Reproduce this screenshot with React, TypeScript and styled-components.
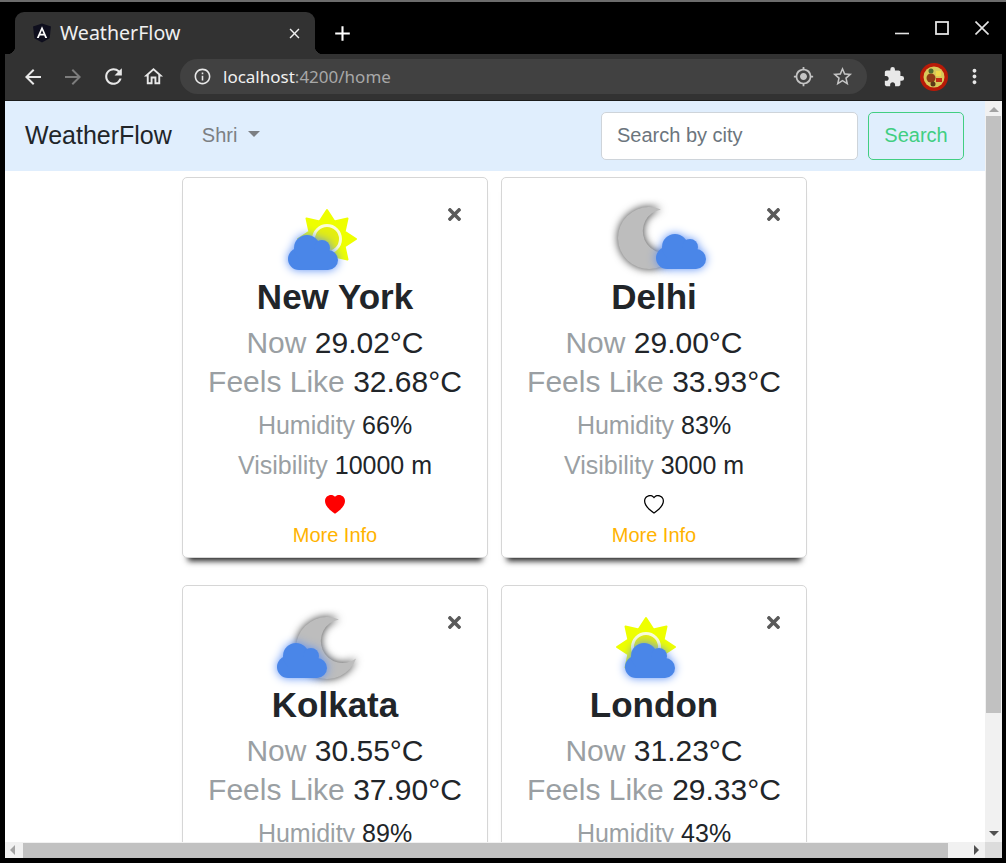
import React from "react";
import styled, { createGlobalStyle } from "styled-components";
import { BsHeart, BsHeartFill } from "react-icons/bs";
import { FaTimes } from "react-icons/fa";
import {
  MdAdd,
  MdArrowBack,
  MdArrowForward,
  MdClose,
  MdExtension,
  MdGpsFixed,
  MdInfoOutline,
  MdMoreVert,
  MdOutlineHome,
  MdRefresh,
  MdStarBorder,
} from "react-icons/md";

const Sans = `"Liberation Sans", Arial, sans-serif`;
const ChromeFont = `"Noto Sans", "Open Sans", sans-serif`;

type Kind = "sunLeft" | "moonLeft" | "moonRight" | "sunCenter";

interface City {
  name: string;
  now: string;
  feels: string;
  humidity: string;
  visibility: string;
  kind: Kind;
  liked: boolean;
}

const cities: City[] = [
  { name: "New York", now: "29.02°C", feels: "32.68°C", humidity: "66%", visibility: "10000 m", kind: "sunLeft", liked: true },
  { name: "Delhi", now: "29.00°C", feels: "33.93°C", humidity: "83%", visibility: "3000 m", kind: "moonLeft", liked: false },
  { name: "Kolkata", now: "30.55°C", feels: "37.90°C", humidity: "89%", visibility: "6000 m", kind: "moonRight", liked: false },
  { name: "London", now: "31.23°C", feels: "29.33°C", humidity: "43%", visibility: "10000 m", kind: "sunCenter", liked: false },
];

const starPoints = Array.from({ length: 16 }, (_, i) => {
  const r = i % 2 === 0 ? 29 : 19;
  const a = (i * Math.PI) / 8 - Math.PI / 2;
  return `${(r * Math.cos(a)).toFixed(1)},${(r * Math.sin(a)).toFixed(1)}`;
}).join(" ");

const Sun = ({ x, y }: { x: number; y: number }) => (
  <g transform={`translate(${x} ${y})`}>
    <polygon points={starPoints} fill="#eeff00" stroke="#eeff00" strokeWidth="2" strokeLinejoin="round" />
    <circle r="13.5" fill="#e4ee10" stroke="#fbfdd8" strokeWidth="3" />
  </g>
);

const Moon = ({ x, y }: { x: number; y: number }) => (
  <MoonShape
    transform={`translate(${x} ${y})`}
    d="M11.9 -28.6A31 31 0 1 0 29.1 10.6A22 22 0 1 1 11.9 -28.6Z"
  />
);

const Cloud = ({ x, y }: { x: number; y: number }) => (
  <CloudShape transform={`translate(${x} ${y})`}>
    <circle cx="11" cy="24" r="11" />
    <circle cx="19" cy="13" r="13" />
    <circle cx="34" cy="13" r="8" />
    <circle cx="40" cy="25" r="10" />
    <rect x="11" y="14" width="29" height="21" />
  </CloudShape>
);

const WeatherIcon = ({ kind }: { kind: Kind }) => (
  <IconSvg viewBox="0 0 120 76">
    {kind === "sunLeft" && (
      <>
        <Sun x={52} y={37} />
        <Cloud x={13} y={33} />
      </>
    )}
    {kind === "moonLeft" && (
      <>
        <Moon x={55} y={36} />
        <Cloud x={62} y={32} />
      </>
    )}
    {kind === "moonRight" && (
      <>
        <Moon x={52} y={38} />
        <Cloud x={2} y={33} />
      </>
    )}
    {kind === "sunCenter" && (
      <>
        <Sun x={52} y={37} />
        <Cloud x={31} y={33} />
      </>
    )}
  </IconSvg>
);

const AngularLogo = () => (
  <svg width="20" height="20" viewBox="0 0 20 20">
    <path d="M10 0.5L1 3.6l1.4 11.6L10 19.5l7.6-4.3L19 3.6z" fill="#0f0f1e" />
    <path d="M10 3.2L4.8 15h2l1-2.6h4.4l1 2.6h2zM8.5 10.8L10 7.2l1.5 3.6z" fill="#fff" />
  </svg>
);

const Avatar = () => (
  <svg width="28" height="28" viewBox="0 0 28 28">
    <circle cx="14" cy="14" r="14" fill="#b81a08" />
    <circle cx="14" cy="14" r="10.5" fill="#d8c85a" />
    <circle cx="11" cy="15" r="4.5" fill="#8e3b16" />
    <rect x="16" y="8" width="5" height="5" fill="#efd94a" />
    <rect x="16" y="15" width="6" height="4" fill="#c22a14" />
    <circle cx="11" cy="8" r="2.5" fill="#4e6a30" />
    <circle cx="13" cy="21" r="2.5" fill="#5b3a18" />
  </svg>
);

const App: React.FC = () => (
  <Frame>
    <GlobalStyle />
    <TabStrip>
      <Tab>
        <AngularLogo />
        <TabTitle>WeatherFlow</TabTitle>
        <MdClose size={17} />
      </Tab>
      <NewTab>
        <MdAdd size={25} />
      </NewTab>
      <WindowControls>
        <svg width="14" height="14" viewBox="0 0 14 14">
          <path d="M0 12.5h14" stroke="#e4e4e4" strokeWidth="1.6" />
        </svg>
        <svg width="14" height="14" viewBox="0 0 14 14">
          <rect x="1" y="1" width="12" height="12" fill="none" stroke="#e4e4e4" strokeWidth="1.8" />
        </svg>
        <svg width="14" height="14" viewBox="0 0 14 14">
          <path d="M0.5 0.5l13 13M13.5 0.5l-13 13" stroke="#e4e4e4" strokeWidth="1.6" />
        </svg>
      </WindowControls>
    </TabStrip>

    <Toolbar>
      <NavIcons>
        <NavSlot>
          <MdArrowBack size={24} color="#e8e8e8" />
        </NavSlot>
        <NavSlot>
          <MdArrowForward size={24} color="#7d7d7d" />
        </NavSlot>
        <NavSlot>
          <MdRefresh size={25} color="#e8e8e8" />
        </NavSlot>
        <NavSlot>
          <MdOutlineHome size={23} color="#e8e8e8" />
        </NavSlot>
      </NavIcons>
      <Omnibox>
        <MdInfoOutline size={19} color="#e8e8e8" />
        <Url>
          localhost<UrlDim>:4200/home</UrlDim>
        </Url>
        <MdGpsFixed size={21} color="#c4c4c4" />
        <MdStarBorder size={23} color="#c4c4c4" />
      </Omnibox>
      <ToolbarEnd>
        <MdExtension size={22} color="#e8e8e8" />
        <Avatar />
        <MdMoreVert size={23} color="#e8e8e8" />
      </ToolbarEnd>
    </Toolbar>

    <Viewport>
      <Page>
        <Navbar>
          <Brand>WeatherFlow</Brand>
          <UserMenu>
            Shri <Caret />
          </UserMenu>
          <SearchForm>
            <SearchInput placeholder="Search by city" />
            <SearchButton>Search</SearchButton>
          </SearchForm>
        </Navbar>
        <CardGrid>
          {cities.map((city) => (
            <Card key={city.name}>
              <CloseButton>
                <FaTimes size={19} />
              </CloseButton>
              <WeatherIcon kind={city.kind} />
              <CityName>{city.name}</CityName>
              <BigLine>
                <Muted>Now</Muted> {city.now}
              </BigLine>
              <BigLine>
                <Muted>Feels Like</Muted> {city.feels}
              </BigLine>
              <SmallLine>
                <Muted>Humidity</Muted> {city.humidity}
              </SmallLine>
              <SmallLine>
                <Muted>Visibility</Muted> {city.visibility}
              </SmallLine>
              <HeartRow>
                {city.liked ? <BsHeartFill size={20} color="#ff0000" /> : <BsHeart size={20} color="#000" />}
              </HeartRow>
              <MoreInfo>More Info</MoreInfo>
            </Card>
          ))}
        </CardGrid>
      </Page>
      <VerticalBar>
        <ArrowUp />
        <VerticalThumb />
        <ArrowDown />
      </VerticalBar>
      <HorizontalBar>
        <ArrowLeft />
        <HorizontalThumb />
        <ArrowRight />
      </HorizontalBar>
      <BarCorner />
    </Viewport>
  </Frame>
);

export default App;

const GlobalStyle = createGlobalStyle`
  html, body {
    margin: 0;
    height: 100%;
    overflow: hidden;
    background: #000;
  }
  * {
    box-sizing: border-box;
  }
`;

const Frame = styled.div`
  width: 1006px;
  height: 863px;
  display: flex;
  flex-direction: column;
  background: #000;
  border-top: 2px solid #6c6c6c;
  padding: 0 4px 5px 5px;
`;

const TabStrip = styled.div`
  height: 52px;
  flex: none;
  display: flex;
  align-items: flex-end;
  padding-left: 10px;
  font-family: ${ChromeFont};
`;

const Tab = styled.div`
  position: relative;
  width: 300px;
  height: 42px;
  display: flex;
  align-items: center;
  padding: 0 12px 0 17px;
  background: #323232;
  border-radius: 9px 9px 0 0;
  color: #f0f0f0;
  &::before,
  &::after {
    content: "";
    position: absolute;
    bottom: 0;
    width: 8px;
    height: 8px;
  }
  &::before {
    left: -8px;
    background: radial-gradient(circle at 0 0, transparent 8px, #323232 8.5px);
  }
  &::after {
    right: -8px;
    background: radial-gradient(circle at 100% 0, transparent 8px, #323232 8.5px);
  }
`;

const TabTitle = styled.span`
  flex: 1;
  margin-left: 8px;
  font-size: 19.6px;
  line-height: 1;
`;

const NewTab = styled.div`
  width: 54px;
  height: 42px;
  display: flex;
  align-items: center;
  justify-content: center;
  color: #fff;
`;

const WindowControls = styled.div`
  margin-left: auto;
  height: 100%;
  display: flex;
  gap: 26px;
  padding: 19px 13px 0 0;
  align-items: flex-start;
`;

const Toolbar = styled.div`
  height: 47px;
  flex: none;
  display: flex;
  align-items: center;
  padding: 0 0 1px 0;
  background: #323232;
  border-bottom: 1px solid #1c1c1c;
  font-family: ${ChromeFont};
`;

const NavIcons = styled.div`
  width: 175px;
  display: flex;
  align-items: center;
  padding-left: 8px;
`;

const NavSlot = styled.div`
  width: 40px;
  display: flex;
  justify-content: center;
`;

const Omnibox = styled.div`
  width: 687px;
  height: 35px;
  display: flex;
  align-items: center;
  gap: 17px;
  padding: 0 13px;
  border-radius: 18px;
  background: #414141;
`;

const Url = styled.div`
  flex: 1;
  margin-left: -6px;
  font-size: 17px;
  color: #f0f0f0;
`;

const UrlDim = styled.span`
  color: #a8a8a8;
`;

const ToolbarEnd = styled.div`
  flex: 1;
  display: flex;
  align-items: center;
  gap: 15px;
  padding-left: 16px;
`;

const Viewport = styled.div`
  flex: 1;
  min-height: 0;
  display: grid;
  grid-template-columns: 1fr 17px;
  grid-template-rows: 1fr 16px;
  background: #fff;
`;

const Page = styled.div`
  overflow: hidden;
  font-family: ${Sans};
  color: #212529;
`;

const Navbar = styled.nav`
  height: 70px;
  display: flex;
  align-items: center;
  padding: 0 21px 0 20px;
  background: #e0eefd;
`;

const Brand = styled.div`
  font-size: 25px;
  margin: -2px 30px 0 0;
`;

const UserMenu = styled.div`
  display: flex;
  align-items: center;
  gap: 11px;
  margin-top: -2px;
  font-size: 20px;
  color: #7c7f83;
`;

const Caret = styled.span`
  width: 0;
  height: 0;
  margin-top: -2px;
  border-top: 6px solid #7c7f83;
  border-left: 6px solid transparent;
  border-right: 6px solid transparent;
`;

const SearchForm = styled.div`
  margin-left: auto;
  display: flex;
  gap: 10px;
`;

const SearchInput = styled.input`
  width: 257px;
  height: 48px;
  padding: 0 15px 2px;
  border: 1px solid #ced4da;
  border-radius: 5px;
  background: #fff;
  font-family: ${Sans};
  font-size: 20px;
  &::placeholder {
    color: #6c757d;
    opacity: 1;
  }
`;

const SearchButton = styled.button`
  width: 96px;
  height: 48px;
  padding: 0 0 2px;
  border: 1px solid #42ce82;
  border-radius: 5px;
  background: transparent;
  color: #42ce82;
  font-family: ${Sans};
  font-size: 20px;
`;

const CardGrid = styled.div`
  display: grid;
  grid-template-columns: 306px 306px;
  grid-auto-rows: 381px;
  gap: 27px 13px;
  justify-content: center;
  padding: 6px 1px 0 0;
`;

const Card = styled.div`
  position: relative;
  display: flex;
  flex-direction: column;
  align-items: center;
  padding-top: 24px;
  border: 1px solid #d6d6d6;
  border-radius: 5px;
  background: #fff;
  box-shadow: 0 9px 6px -6px #222;
`;

const CloseButton = styled.div`
  position: absolute;
  top: 27px;
  right: 23px;
  display: flex;
  color: #5a5a5a;
`;

const IconSvg = styled.svg`
  width: 120px;
  height: 76px;
  flex: none;
  overflow: visible;
`;

const MoonShape = styled.path`
  fill: #bdbdbd;
  filter: drop-shadow(0 0 4px #3a3a3a);
`;

const CloudShape = styled.g`
  fill: #4a86e8;
  filter: drop-shadow(0 0 5px #5b8ff5);
`;

const CityName = styled.h2`
  margin: 0 0 7px;
  font-size: 35px;
  line-height: 38px;
  font-weight: 700;
`;

const BigLine = styled.div`
  font-size: 30px;
  line-height: 39px;
  white-space: nowrap;
`;

const SmallLine = styled.div`
  margin-top: 5px;
  font-size: 25px;
  line-height: 35px;
  white-space: nowrap;
  ${BigLine} + & {
    margin-top: 7px;
  }
`;

const Muted = styled.span`
  color: #9a9fa3;
`;

const HeartRow = styled.div`
  height: 24px;
  margin-top: 10px;
  display: flex;
  align-items: center;
`;

const MoreInfo = styled.div`
  margin-top: 6px;
  font-size: 20px;
  line-height: 24px;
  color: #ffb300;
`;

const VerticalBar = styled.div`
  display: flex;
  flex-direction: column;
  align-items: center;
  background: #f1f1f1;
`;

const VerticalThumb = styled.div`
  width: 15px;
  flex: 1;
  margin: 4px 0 118px;
  background: #c1c1c1;
`;

const HorizontalBar = styled.div`
  display: flex;
  align-items: center;
  background: #f1f1f1;
`;

const HorizontalThumb = styled.div`
  height: 15px;
  width: 925px;
  margin: 0 auto 0 8px;
  background: #c1c1c1;
`;

const BarCorner = styled.div`
  background: #dcdcdc;
`;

const ArrowUp = styled.span`
  margin-top: 6px;
  border-bottom: 5px solid #a3a3a3;
  border-left: 5px solid transparent;
  border-right: 5px solid transparent;
`;

const ArrowDown = styled.span`
  margin-bottom: 6px;
  border-top: 5px solid #505050;
  border-left: 5px solid transparent;
  border-right: 5px solid transparent;
`;

const ArrowLeft = styled.span`
  margin-left: 5px;
  border-right: 5px solid #a3a3a3;
  border-top: 5px solid transparent;
  border-bottom: 5px solid transparent;
`;

const ArrowRight = styled.span`
  margin-right: 6px;
  border-left: 5px solid #505050;
  border-top: 5px solid transparent;
  border-bottom: 5px solid transparent;
`;
